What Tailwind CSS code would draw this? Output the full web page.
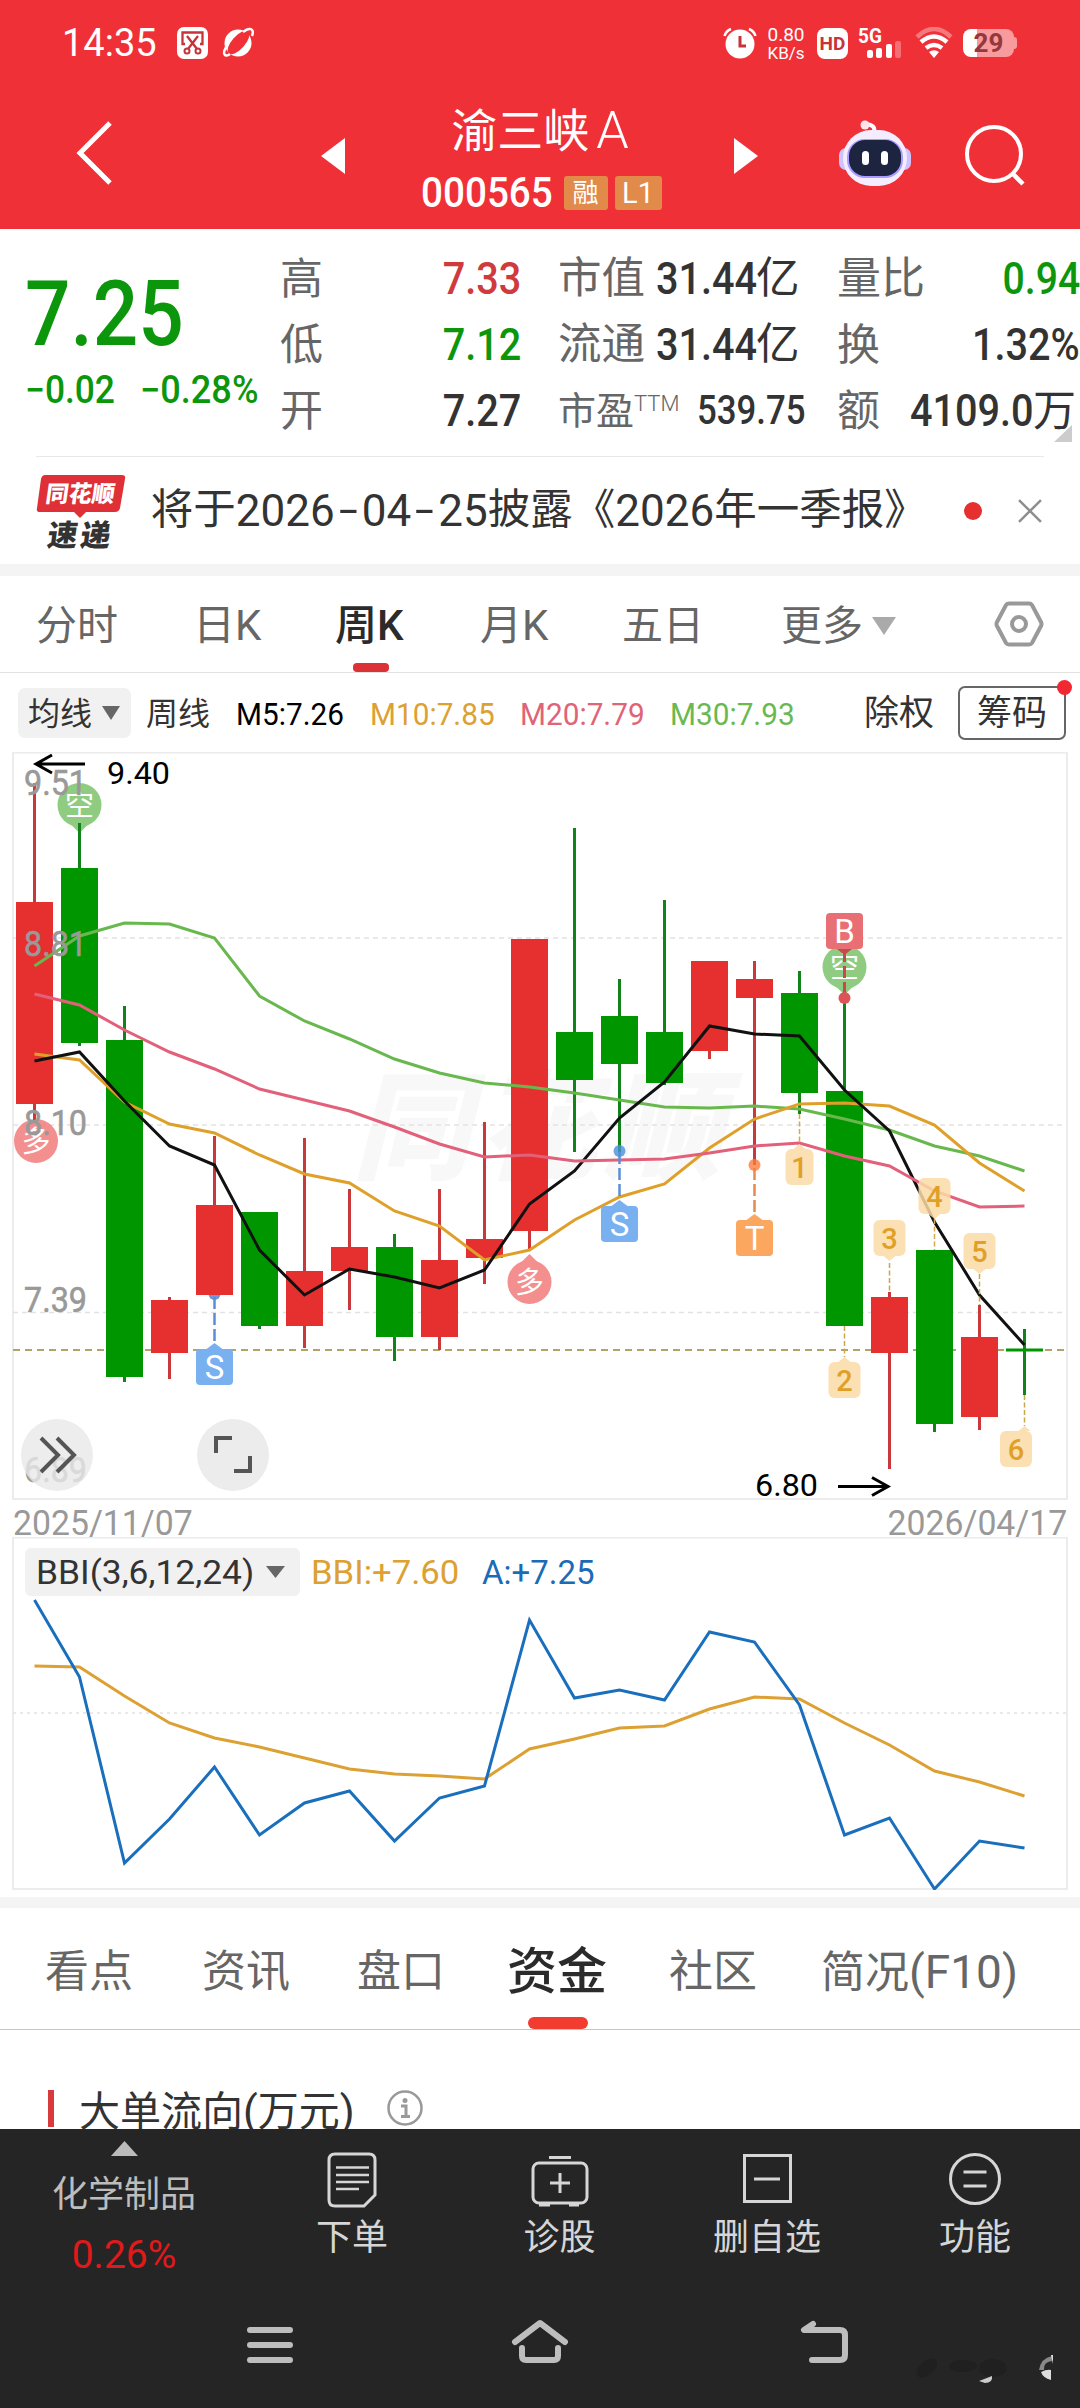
<!DOCTYPE html>
<html lang="zh-CN">
<head>
<meta charset="utf-8">
<title>渝三峡A 000565</title>
<script src="https://cdn.jsdelivr.net/npm/@tailwindcss/browser@4"></script>
</head>
<body class="bg-white">
<div class="flex h-[2408px] w-[1080px] flex-col overflow-hidden bg-white font-[Roboto,'Noto_Sans_CJK_SC',sans-serif] leading-none whitespace-nowrap text-[#333]">

  <!-- header -->
  <header class="flex h-[229px] shrink-0 flex-col bg-[#f03037] text-white">
    <div class="flex h-[86px] items-center pl-[62px]">
      <span class="w-[115px] text-[38px]">14:35</span>
      <svg class="h-[32px] w-[31px]" viewBox="0 0 31 32"><rect width="31" height="32" rx="7" fill="#fff"/><path d="M8 17H5.500V5.500H25.500V17H23M10 9l10 13M21 9L11 22" fill="none" stroke="#c73338" stroke-width="2.300"/><circle cx="10" cy="24" r="2.500" fill="none" stroke="#c73338" stroke-width="2"/><circle cx="21" cy="24" r="2.500" fill="none" stroke="#c73338" stroke-width="2"/></svg>
      <svg class="ml-[14px] h-[32px] w-[32px]" viewBox="0 0 32 32"><circle cx="16" cy="16" r="13.500" fill="#fff"/><ellipse cx="16.500" cy="15.500" rx="14.500" ry="6.500" transform="rotate(-48 16.500 15.500)" fill="#f03037"/><path d="M8 27C3 31 0 27 4 20M21 5C27 0 33 1 30 9" fill="none" stroke="#fff" stroke-width="2.500"/></svg>
      <svg class="ml-[468px] h-[32px] w-[36px]" viewBox="0 0 36 32"><circle cx="18" cy="17" r="14.500" fill="#fff"/><path d="M2.500 9Q4 4 9 2M33.500 9Q32 4 27 2" stroke="#fff" stroke-width="2.500" fill="none"/><path d="M18 9V19H24" fill="none" stroke="#c73338" stroke-width="3"/></svg>
      <div class="ml-[8px] flex w-[40px] flex-col items-center gap-[1px] text-[19px]"><span>0.80</span><span class="text-[17px]">KB/s</span></div>
      <div class="ml-[11px] flex h-[31px] w-[31px] items-center justify-center rounded-[8px] bg-white text-[19px] font-bold text-[#c73338]">HD</div>
      <div class="relative ml-[10px] h-[34px] w-[47px]">
        <span class="absolute top-0 left-0 origin-left scale-x-[.95] text-[20px] font-bold">5G</span>
        <svg class="absolute inset-0 h-[34px] w-[46px]" viewBox="0 0 46 34"><rect x="9" y="24" width="6" height="8" rx="2" fill="#fff"/><rect x="18" y="22" width="6" height="10" rx="2" fill="#fff"/><rect x="28" y="18" width="6" height="14" rx="2" fill="#fff"/><rect x="37" y="15" width="6" height="17" rx="2" fill="#fff" opacity=".3"/></svg>
      </div>
      <svg class="ml-[10px] h-[32px] w-[38px]" viewBox="0 0 38 32" fill="none" stroke="#fff" stroke-width="4.500"><path d="M2 10Q19 -6 36 10" opacity=".35"/><path d="M6 15Q19 4 32 15"/><path d="M11 21Q19 15 27 21"/><path d="M14 25Q19 21.500 24 25L19 31Z" fill="#fff" stroke="none"/></svg>
      <div class="ml-[10px] flex items-center"><div class="flex h-[28px] w-[51px] items-center justify-center rounded-[8px] bg-linear-to-r from-white from-28% to-[#f99a9d] to-28% text-[26px] font-bold text-[#93383c]">29</div><div class="h-[12px] w-[3px] rounded-r bg-[#f99a9d]"></div></div>
    </div>
    <div class="flex h-[143px] items-start">
      <svg class="mt-[33px] ml-[74px] h-[68px] w-[42px]" viewBox="0 0 42 68"><path d="M36 4L6 34L36 64" fill="none" stroke="#fff" stroke-width="5"/></svg>
      <svg class="mt-[52px] ml-[205px] h-[36px] w-[25px]" viewBox="0 0 25 36"><path d="M24 0V36L0 18Z" fill="#fff"/></svg>
      <div class="ml-[68px] flex w-[254px] flex-col items-center pt-[19px]">
        <div class="flex items-center pr-[2px] text-[46px]"><span>渝三峡</span><span class="ml-[7px] text-[52px] font-light">A</span></div>
        <div class="mt-[15px] flex items-center">
          <span class="w-[134px] origin-left scale-x-[.92] text-[42px] font-medium">000565</span>
          <span class="ml-[9px] flex h-[34px] w-[44px] items-center justify-center rounded-[3px] bg-[#e28a4a] text-[26px]">融</span>
          <span class="ml-[7px] flex h-[34px] w-[47px] items-center justify-center rounded-[3px] bg-[#e28a4a] text-[29px]">L1</span>
        </div>
      </div>
      <svg class="mt-[52px] ml-[65px] h-[36px] w-[25px]" viewBox="0 0 25 36"><path d="M1 0V36L25 18Z" fill="#fff"/></svg>
      <svg class="mt-[33px] ml-[80px] h-[70px] w-[74px]" viewBox="0 0 74 70">
        <path d="M36 13Q38 6 28 5" fill="none" stroke="#fff" stroke-width="4"/><circle cx="27" cy="6" r="4.500" fill="#ffe4ee"/>
        <rect x="1" y="29" width="14" height="22" rx="7" fill="#cfc3ff"/><rect x="59" y="29" width="14" height="22" rx="7" fill="#cfc3ff"/>
        <rect x="5" y="11" width="64" height="56" rx="28" fill="#f3edff"/><rect x="9" y="20" width="56" height="39" rx="18" fill="#a99bff"/><rect x="11" y="21" width="52" height="36" rx="16" fill="#1c2440"/>
        <rect x="24" y="32" width="7" height="14" rx="3.500" fill="#fff"/><rect x="43" y="32" width="7" height="14" rx="3.500" fill="#fff"/>
      </svg>
      <svg class="mt-[37px] ml-[50px] h-[64px] w-[66px]" viewBox="0 0 66 64"><circle cx="32" cy="31" r="27" fill="none" stroke="#fff" stroke-width="4"/><path d="M51 51L61 61" stroke="#fff" stroke-width="4.500"/></svg>
    </div>
  </header>

  <!-- quote -->
  <section class="relative flex h-[227px] shrink-0">
    <div class="flex w-[280px] flex-col pt-[41px] pl-[25px] text-[#0c960c]">
      <span class="origin-left scale-x-[.89] text-[90px] font-medium">7.25</span>
      <div class="mt-[11px] flex text-[38px] font-medium"><span class="w-[115px] origin-left scale-x-[.93]">−0.02</span><span class="origin-left scale-x-[.95]">−0.28%</span></div>
    </div>
    <div class="flex w-[241px] flex-col gap-[22px] pt-[28px] text-[43px]">
      <div class="flex items-center justify-between"><span class="text-[#666]">高</span><span class="origin-right scale-x-[.9] text-[44px] font-medium text-[#cf3a3c]">7.33</span></div>
      <div class="flex items-center justify-between"><span class="text-[#666]">低</span><span class="origin-right scale-x-[.9] text-[44px] font-medium text-[#0c960c]">7.12</span></div>
      <div class="flex items-center justify-between"><span class="text-[#666]">开</span><span class="origin-right scale-x-[.9] text-[44px] font-medium">7.27</span></div>
    </div>
    <div class="ml-[37px] flex w-[243px] flex-col gap-[22px] pt-[28px] text-[43.500px]">
      <div class="flex h-[44px] items-center"><span class="text-[#666]">市值</span><span class="ml-[11px] w-[100px] origin-left scale-x-[.9] text-[44px] font-medium">31.44</span><span>亿</span></div>
      <div class="flex h-[44px] items-center"><span class="text-[#666]">流通</span><span class="ml-[11px] w-[100px] origin-left scale-x-[.9] text-[44px] font-medium">31.44</span><span>亿</span></div>
      <div class="flex h-[44px] items-center"><span class="text-[38px] text-[#666]">市盈</span><span class="mb-[14px] text-[22px] font-light text-[#666]">TTM</span><span class="ml-[17px] w-[108px] origin-left scale-x-[.87] text-[40px] font-medium">539.75</span></div>
    </div>
    <div class="ml-[36px] flex w-[243px] flex-col gap-[22px] pt-[28px] text-[43px]">
      <div class="flex h-[44px] items-center justify-between"><span class="text-[44px] text-[#666]">量比</span><span class="origin-right scale-x-[.89] text-[44px] font-medium text-[#0c960c]">0.94</span></div>
      <div class="flex h-[44px] items-center justify-between"><span class="text-[#666]">换</span><span class="origin-right scale-x-[.9] text-[44px] font-medium">1.32%</span></div>
      <div class="flex h-[44px] items-center"><span class="text-[#666]">额</span><span class="ml-[30px] w-[123px] origin-left scale-x-[.9] text-[44px] font-medium">4109.0</span><span>万</span></div>
    </div>
    <svg class="absolute top-[196px] left-[1054px] h-[17px] w-[18px]" viewBox="0 0 18 17"><path d="M18 0V17H0Z" fill="#ccc"/></svg>
  </section>

  <!-- news strip -->
  <section class="flex h-[108px] shrink-0 items-center px-[36px]">
    <div class="flex h-full w-full items-center border-t border-[#e8e8e8]">
      <div class="relative flex h-[76px] w-[90px] flex-col items-center font-['Noto_Sans_CJK_SC'] font-black">
        <svg class="absolute inset-0 h-[76px] w-[90px]" viewBox="0 0 90 76"><path d="M9 2H86Q90 2 89 6L84 35Q83 39 79 39H50L44 45L38 39H4Q0 39 1 35L5 6Q6 2 9 2Z" fill="#de3036"/></svg>
        <span class="relative mt-[8px] -skew-x-8 text-[23px] text-white">同花顺</span>
        <span class="relative mt-[14px] -skew-x-8 text-[30px] tracking-[3px]">速递</span>
      </div>
      <div class="ml-[25px] flex h-[50px] w-[806px] items-center text-[42.500px]"><span>将于</span><span class="text-[44px]">2026</span><span class="w-[27px] scale-x-160 text-center">-</span><span class="text-[44px]">04</span><span class="w-[27px] scale-x-160 text-center">-</span><span class="text-[44px]">25</span><span>披露《</span><span class="text-[44px]">2026</span><span>年一季报》</span></div>
      <i class="ml-[9px] size-[18px] rounded-full bg-[#e63030]"></i>
      <svg class="ml-[34px] h-[28px] w-[28px]" viewBox="0 0 28 28"><path d="M3 3L25 25M25 3L3 25" stroke="#8e8e8e" stroke-width="2.500"/></svg>
    </div>
  </section>
  <div class="h-[12px] shrink-0 bg-[#f4f4f4]"></div>

  <!-- period tabs -->
  <nav class="flex h-[97px] shrink-0 items-center border-b border-[#e2e2e2] pt-[4px] text-[41px] text-[#666]">
    <span class="ml-[36px] w-[157px]">分时</span>
    <span class="w-[142px] text-[42px]">日K</span>
    <span class="relative flex h-full w-[145px] items-center text-[42px] font-medium text-[#2b2b2b]">周K<i class="absolute bottom-0 left-[18px] h-[9px] w-[36px] rounded-[4px] bg-[#da3237]"></i></span>
    <span class="w-[142px] text-[42px]">月K</span>
    <span class="w-[159px]">五日</span>
    <span>更多</span>
    <svg class="ml-[9px] h-[20px] w-[24px]" viewBox="0 0 24 20"><path d="M0 1H24L12 19Z" fill="#aaa"/></svg>
    <svg class="mb-[4px] ml-[98px] h-[48px] w-[50px]" viewBox="0 0 50 48" fill="none" stroke="#999" stroke-width="4"><path d="M15 3.500H35Q37 3.500 38 5L47 22Q48 24 47 26L38 43Q37 44.500 35 44.500H15Q13 44.500 12 43L3 26Q2 24 3 22L12 5Q13 3.500 15 3.500Z"/><circle cx="25" cy="24" r="7"/></svg>
  </nav>

  <!-- moving-average legend -->
  <div class="flex h-[79px] shrink-0 items-center text-[32px]">
    <div class="ml-[18px] flex h-[50px] w-[113px] items-center rounded-[7px] bg-[#f1f1f1] pl-[10px]"><span class="pt-[2px]">均线</span><svg class="ml-[10px] h-[14px] w-[18px]" viewBox="0 0 18 14"><path d="M0 0H18L9 14Z" fill="#666"/></svg></div>
    <span class="ml-[15px] w-[75px] pt-[2px]">周线</span>
    <span class="ml-[15px] w-[134px] origin-left scale-x-[.93] pt-[2px] text-black">M5:7.26</span>
    <span class="w-[150px] origin-left scale-x-[.93] pt-[2px] text-[#dca132]">M10:7.85</span>
    <span class="w-[150px] origin-left scale-x-[.93] pt-[2px] text-[#e06478]">M20:7.79</span>
    <span class="w-[194px] origin-left scale-x-[.93] pt-[2px] text-[#6ab850]">M30:7.93</span>
    <span class="pt-[2px] text-[35px]">除权</span>
    <div class="relative ml-[24px] flex h-[54px] w-[108px] items-center justify-center rounded-[7px] border-2 border-[#666] pt-[2px] text-[35px]">筹码<i class="absolute -top-[8px] -right-[8px] size-[15px] rounded-full bg-[#f02832]"></i></div>
  </div>

  <!-- weekly candles -->
  <section class="relative h-[748px] shrink-0">
    <svg id="kline" class="block h-[748px] w-[1080px]" viewBox="0 752 1080 748"></svg>
    <div class="absolute top-[667px] left-[21px] flex size-[72px] items-center justify-center rounded-full bg-[#e8e8e8]/80"><svg class="h-[38px] w-[40px]" viewBox="0 0 40 38" fill="none" stroke="#555" stroke-width="4"><path d="M4 2L21 19L4 36M20 2L37 19L20 36"/></svg></div>
    <div class="absolute top-[667px] left-[197px] flex size-[72px] items-center justify-center rounded-full bg-[#ececec]"><svg class="h-[38px] w-[38px]" viewBox="0 0 38 38" fill="none" stroke="#555" stroke-width="4"><path d="M2 17V2H18M36 20V35H20"/></svg></div>
  </section>
  <div class="flex h-[37px] shrink-0 items-end justify-between px-[13px] text-[35px] text-[#999]"><span class="h-[31px] origin-left scale-x-[.965]">2025/11/07</span><span class="h-[31px] origin-right scale-x-[.965]">2026/04/17</span></div>

  <!-- BBI -->
  <section class="relative h-[353px] shrink-0">
    <svg id="bbi" class="absolute inset-0 h-[353px] w-[1080px]" viewBox="0 1537 1080 353"></svg>
    <div class="relative flex items-center pt-[11px] pl-[25px] text-[34px]">
      <div class="flex h-[48px] w-[275px] items-center rounded-[6px] bg-[#f1f1f1] pl-[11px]"><span class="w-[230px] origin-left scale-x-[1.04]">BBI(3,6,12,24)</span><svg class="h-[12px] w-[19px]" viewBox="0 0 19 12"><path d="M0 0H19L9.500 12Z" fill="#666"/></svg></div>
      <span class="ml-[11px] w-[171px] origin-left scale-x-[1.02] text-[#dca132]">BBI:+7.60</span>
      <span class="origin-left scale-x-[.97] text-[#1a6bb8]">A:+7.25</span>
    </div>
  </section>
  <div class="mt-[7px] h-[11px] shrink-0 bg-[#f4f4f4]"></div>

  <!-- content tabs -->
  <nav class="flex h-[122px] shrink-0 items-center border-b border-[#c6c6c6] pt-[6px] text-[44px] text-[#666]">
    <span class="ml-[45px] w-[157px]">看点</span>
    <span class="w-[155px]">资讯</span>
    <span class="w-[150px]">盘口</span>
    <span class="relative flex h-full w-[162px] items-center text-[50px] font-medium text-[#2b2b2b]">资金<i class="absolute bottom-0 left-[21px] h-[12px] w-[60px] rounded-[6px] bg-[#f23c30]"></i></span>
    <span class="w-[152px]">社区</span>
    <span>简况<span class="text-[46px]">(F10)</span></span>
  </nav>
  <section class="flex h-[99px] shrink-0 items-start overflow-hidden pt-[59px]">
    <i class="mt-[1px] ml-[48px] h-[37px] w-[6px] bg-[#d83a3e]"></i>
    <span class="mt-[1px] ml-[25px] w-[284px] text-[41px]">大单流向<span class="text-[43px]">(</span>万元<span class="text-[43px]">)</span></span>
    <svg class="ml-[23px] h-[38px] w-[38px]" viewBox="0 0 38 38"><circle cx="19" cy="19" r="16.500" fill="none" stroke="#999" stroke-width="2.500"/><circle cx="19" cy="11.500" r="2.500" fill="#999"/><path d="M15 17H20V27M15 27.500H24" fill="none" stroke="#999" stroke-width="3"/></svg>
  </section>

  <!-- dock -->
  <footer class="flex h-[279px] shrink-0 flex-col bg-[#252525] text-[36px] text-[#d6d6d6]">
    <div class="flex h-[170px]">
      <div class="flex w-[248px] flex-col items-center pt-[12px] text-[#bdbdbd]"><svg class="h-[15px] w-[27px]" viewBox="0 0 27 15"><path d="M0 15L13.500 0L27 15Z" fill="#bbb"/></svg><span class="mt-[21px]">化学制品</span><span class="mt-[23px] text-[39px] text-[#e01a1a]">0.26%</span></div>
      <div class="flex w-[208px] flex-col items-center pt-[22px]"><svg class="h-[58px] w-[52px]" viewBox="0 0 52 58" fill="none" stroke="#d6d6d6" stroke-width="3"><path d="M9 3H43Q49 3 49 9V44L38 55H9Q3 55 3 49V9Q3 3 9 3Z"/><path d="M10 16.500H43M10 24H43M10 31H43M10 38H33" stroke-width="2.500"/></svg><span class="mt-[11px]">下单</span></div>
      <div class="flex w-[207px] flex-col items-center pt-[22px]"><svg class="h-[58px] w-[58px]" viewBox="0 0 58 58" fill="none" stroke="#d6d6d6" stroke-width="3"><path d="M18 6.500H40" /><rect x="2" y="12" width="54" height="40" rx="6"/><path d="M29 22V42M19 32H39M8 54H19M38 54H48"/></svg><span class="mt-[11px]">诊股</span></div>
      <div class="flex w-[208px] flex-col items-center pt-[22px]"><svg class="h-[58px] w-[52px]" viewBox="0 0 52 58" fill="none" stroke="#d6d6d6" stroke-width="3"><rect x="3.500" y="4.500" width="46" height="46"/><path d="M13 28H39"/></svg><span class="mt-[11px]">删自选</span></div>
      <div class="flex w-[208px] flex-col items-center pt-[22px]"><svg class="h-[58px] w-[54px]" viewBox="0 0 54 58" fill="none" stroke="#d6d6d6" stroke-width="3"><circle cx="27" cy="28" r="24.500"/><path d="M15.500 21H38.500M15.500 35H38.500"/></svg><span class="mt-[11px]">功能</span></div>
    </div>
    <div class="flex h-[109px] items-start pt-[19px]" >
      <svg class="ml-[247px] h-[50px] w-[46px]" viewBox="0 0 46 50"><path d="M3 12H43M3 27H43M3 42H43" stroke="#bdbdbd" stroke-width="6" stroke-linecap="round"/></svg>
      <svg class="ml-[217px] h-[50px] w-[60px]" viewBox="0 0 60 50" fill="none" stroke="#bdbdbd" stroke-width="6" stroke-linecap="round" stroke-linejoin="round"><path d="M5 24L30 5L55 24M12 30V38Q12 42 16 42H44Q48 42 48 38V30"/></svg>
      <svg class="ml-[229px] h-[50px] w-[52px]" viewBox="0 0 52 50" fill="none" stroke="#bdbdbd" stroke-width="6" stroke-linecap="round" stroke-linejoin="round"><path d="M14 6L5 12H41Q46 12 46 17V37Q46 42 41 42H13"/></svg>
      <svg class="mt-[34px] ml-[54px] h-[34px] w-[155px]" viewBox="0 0 155 34"><g fill="#202020"><ellipse cx="22" cy="16" rx="12" ry="7" transform="rotate(-40 22 16)"/><ellipse cx="58" cy="14" rx="14" ry="6"/><ellipse cx="88" cy="16" rx="14" ry="9"/></g><path d="M74 29Q82 26 87 24Q88 31 80 31Z" fill="#ccc"/><path d="M134 18Q136 6 147 4V9Q138 10 139 18Z" fill="#888"/><path d="M146 3H148V12M136 20Q142 17 146 18V28Q138 26 136 20Z" fill="#ddd"/></svg>
    </div>
  </footer>
</div>

<script>
const X = i => 34.5 + 45 * i;
const RED = '#e63030', GREEN = '#009600';
// per week: wick top, body top, body bottom, wick bottom, colour
const candles = [
  [783,902,1104,1120,RED],[823,868,1043,1046,GREEN],[1006,1040,1377,1382,GREEN],[1297,1300,1353,1379,RED],
  [1136,1205,1295,1295,RED],[1212,1212,1326,1329,GREEN],[1138,1271,1326,1348,RED],[1189,1247,1271,1310,RED],
  [1234,1247,1337,1361,GREEN],[1189,1260,1337,1350,RED],[1122,1239,1258,1284,RED],[939,939,1231,1250,RED],
  [828,1032,1080,1152,GREEN],[979,1016,1064,1152,GREEN],[900,1032,1083,1085,GREEN],[961,961,1051,1059,RED],
  [961,979,998,1165,RED],[971,993,1093,1114,GREEN],[998,1091,1326,1326,GREEN],[1292,1297,1353,1469,RED],
  [1250,1250,1424,1432,GREEN],[1305,1337,1417,1430,RED],[1329,1348.5,1351.5,1395,GREEN]];
const lines = {
  '#68b84e':[966,936,923,924,938,996,1021,1039,1059,1073,1083,1087,1093,1100,1107,1108,1106,1109,1119,1130,1146,1156,1171],
  '#dfa02a':[1054,1060,1102,1124,1133,1155,1174,1183,1211,1226,1260,1250,1220,1197,1184,1148,1119,1104,1103,1106,1125,1163,1191],
  '#111':[1061,1052,1101,1146,1165,1250,1295,1269,1277,1288,1270,1204,1171,1118,1082,1026,1034,1036,1090,1131,1222,1295,1345],
  '#e2607a':[994,1005,1030,1052,1069,1089,1100,1111,1127,1144,1157,1155,1161,1160,1159,1153,1146,1143,1156,1166,1191,1207,1206]};
const poly = (ys, c, w) => `<polyline points="${ys.map((y, i) => X(i) + ',' + y).join(' ')}" fill="none" stroke="${c}" stroke-width="${w}"/>`;
const txt = (x, y, s, size, c, len, extra = '') => `<text x="${x}" y="${y}" font-size="${size}" fill="${c}" ${len ? `textLength="${len}" lengthAdjust="spacingAndGlyphs"` : ''} ${extra}>${s}</text>`;
const mid = 'text-anchor="middle"';
const hline = (y, c, w, d) => `<path d="M13 ${y}H1066" stroke="${c}" stroke-width="${w}" stroke-dasharray="${d}"/>`;
const tag = (cx, top, s, c) => `<path d="M${cx-8} ${top}L${cx} ${top-6}L${cx+8} ${top}Z" fill="${c}"/><rect x="${cx-18.5}" y="${top}" width="37" height="36" rx="4" fill="${c}"/>` + txt(cx, top+30, s, 33, '#fff', 0, mid);
const leg = (x, y1, y2, c, w, d) => `<path d="M${x} ${y1}V${y2}" stroke="${c}" stroke-width="${w}" stroke-dasharray="${d}"/>`;
const num = (cx, top, s, up, px = cx, w = 32) => `<g opacity=".85"><rect x="${cx-w/2}" y="${top}" width="${w}" height="36" rx="6" fill="#fbdba8"/><path d="${up ? `M${px-6} ${top}L${px} ${top-5}L${px+6} ${top}Z` : `M${px-6} ${top+36}L${px} ${top+41}L${px+6} ${top+36}Z`}" fill="#fbdba8"/></g>` + txt(cx, top+28.5, s, 29, '#e0a028', 0, mid + ' font-weight="500"');
const pin = (cx, cy, s, c, dir) => `<g opacity=".85"><circle cx="${cx}" cy="${cy}" r="22" fill="${c}"/>${dir ? `<path d="M${cx-9} ${cy+dir*19}L${cx} ${cy+dir*28}L${cx+9} ${cy+dir*19}Z" fill="${c}"/>` : ''}${txt(cx, cy+10.5, s, 29, '#fff', 0, mid)}</g>`;

let k = '';
k += `<rect x="13" y="752.5" width="1054" height="746.5" fill="none" stroke="#ececec" stroke-width="2"/>`;
k += `<text x="352" y="1170" font-size="118" font-weight="900" fill="#f8f8f8" textLength="370" font-style="italic">同花顺</text>`;
k += hline(938, '#e2e2e2', 1.5, '5 4') + hline(1125, '#e2e2e2', 1.5, '5 4') + hline(1312.5, '#e2e2e2', 1.5, '5 4');
k += hline(1350, '#b5a266', 2, '7 5');
k += pin(79.5, 805, '空', '#7cc46c', 1) + pin(36, 1141, '多', '#f27c7c', 0) + pin(529.5, 1282, '多', '#f27c7c', -1) + pin(844.5, 967, '空', '#7cc46c', 1);
k += `<circle cx="214.5" cy="1294" r="6" fill="#6f96dd"/>`;
candles.forEach(([a, b, c, d, col], i) => {
  k += `<rect x="${X(i)-1.5}" y="${a}" width="3" height="${d-a}" fill="${col === RED ? '#c9383b' : '#12821a'}"/><rect x="${X(i)-18.5}" y="${b}" width="37" height="${c-b}" fill="${col}"/>`;
});
for (const c in lines) k += poly(lines[c], c, 3);
k += leg(214.5, 1297, 1343, '#5a8fd6', 2.5, '12 4') + tag(214.5, 1349, 'S', '#79b0f0');
k += leg(619.5, 1152, 1200, '#5a8fd6', 2.5, '12 4') + `<circle cx="619.5" cy="1151" r="6" fill="#4a90d9" opacity=".8"/>` + tag(619.5, 1206, 'S', '#79b0f0');
k += leg(754.5, 1168, 1214, '#e58a50', 2.5, '12 4') + `<circle cx="754.500" cy="1165" r="6" fill="#fb7c3c" opacity=".8"/>` + tag(754.5, 1220, 'T', '#fba760');
k += leg(844.5, 950, 996, '#c9484b', 3, '12 4') + `<circle cx="844.500" cy="998" r="6" fill="#dd5458"/><rect x="826" y="913" width="37" height="36" rx="4" fill="#e87074"/><path d="M837 949L844.500 955L852 949Z" fill="#c9484b"/>` + txt(844.5, 943, 'B', 33, '#fff', 0, mid);
k += leg(799.5, 1114, 1144, '#d8a94a', 1.5, '5 2.5') + leg(844.5, 1326, 1357, '#c8a84a', 1.5, '5 2.5') + leg(889.5, 1263, 1292, '#c8a84a', 1.5, '5 2.5') + leg(934.5, 1219, 1250, '#d8a94a', 1.5, '5 2.5') + leg(979.5, 1274, 1305, '#c8a84a', 1.5, '5 2.5') + leg(1024.5, 1395, 1426, '#c8a84a', 1.5, '5 2.5');
k += num(799.5, 1149, '1', true, 799.5, 28) + num(844.5, 1362, '2', true) + num(889.5, 1220, '3', false) + num(934.5, 1178, '4', false) + num(979.5, 1233, '5', false) + num(1016, 1431, '6', true, 1024.5);
for (const [y, s] of [[794.5,'9.51'],[956,'8.81'],[1134.5,'8.10'],[1312,'7.39'],[1482,'6.89']]) k += txt(24, y, s, 35, '#999', 63, 'stroke="#999" stroke-width=".6"');
k += txt(107, 783.5, '9.40', 31, '#000', 63) + `<path d="M85 764H36M52 755L36 764L52 773" fill="none" stroke="#000" stroke-width="3"/>`;
k += txt(755, 1496, '6.80', 31, '#000', 63) + `<path d="M838 1486.500H888M872 1477.500L888 1486.500L872 1495.500" fill="none" stroke="#000" stroke-width="3"/>`;
document.getElementById('kline').innerHTML = k;

const bbi = [1666,1667,1696,1723,1738,1747,1758,1769,1774,1776,1779,1749,1739,1728,1726,1709,1697,1699,1723,1745,1771,1782,1796];
const close = [1600,1677,1863,1819,1767,1835,1803,1791,1841,1798,1786,1620,1698,1690,1700,1632,1642,1705,1835,1818,1889,1841,1848];
document.getElementById('bbi').innerHTML =
  `<rect x="13" y="1537.5" width="1054" height="351.5" fill="none" stroke="#ececec" stroke-width="2"/>` +
  hline(1713, '#e2e2e2', 1.5, '3 4') + poly(bbi, '#dca132', 3) + poly(close, '#1a6fbd', 3);
</script>
</body>
</html>
